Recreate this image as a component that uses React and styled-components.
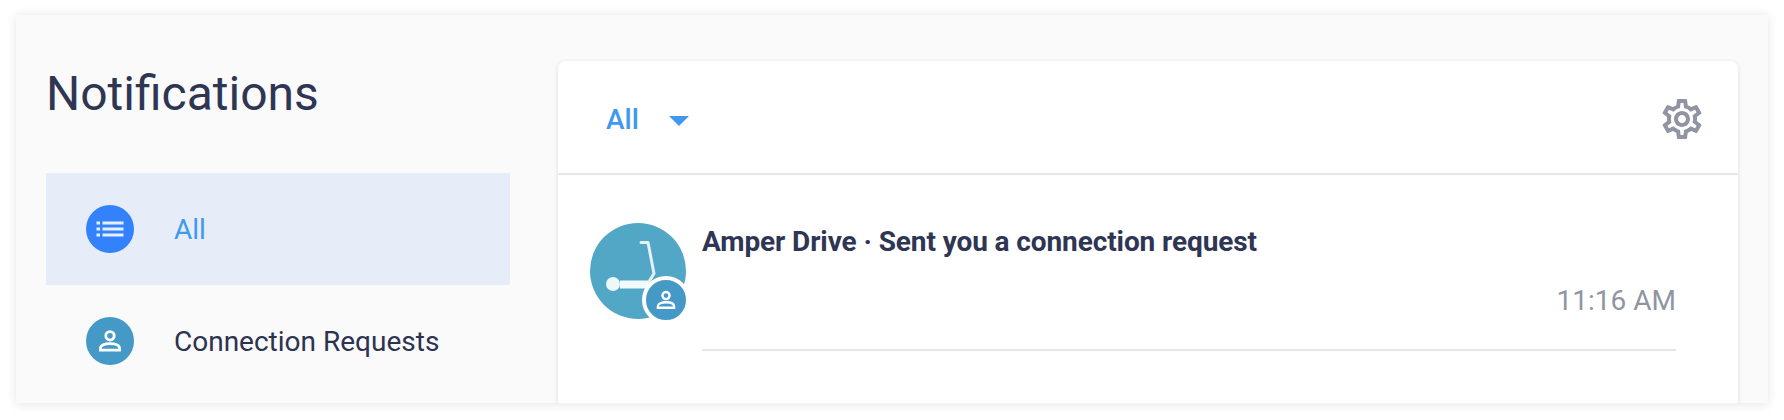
import React from "react";
import styled, { createGlobalStyle } from "styled-components";
import { MdOutlineSettings } from "react-icons/md";

const Global = createGlobalStyle`
  html, body { margin: 0; padding: 0; background: #fff; }
  body { font-family: Roboto, "Liberation Sans", sans-serif; }
  #root { width: 1784px; height: 420px; overflow: hidden; }
`;
const Page = styled.div`
  padding: 15px 16px 17px 16px;
  height: 420px;
  box-sizing: border-box;
`;
const Panel = styled.div`
  height: 388px;
  background: #fafafa;
  box-shadow: 0 1px 10px rgba(30, 40, 70, 0.12);
  display: flex;
  overflow: hidden;
  padding: 46px 30px 0 30px;
  box-sizing: border-box;
`;
const Sidebar = styled.aside`
  width: 464px;
  margin-right: 48px;
  flex: none;
`;
const Title = styled.h1`
  margin: 6px 0 52px;
  font-size: 48px;
  line-height: 54px;
  font-weight: 400;
  color: #2e3654;
`;
const NavItem = styled.div`
  height: 112px;
  display: flex;
  align-items: center;
  padding-left: 40px;
  gap: 40px;
  font-size: 28px;
  color: ${(p) => (p.$active ? "#4098f0" : "#2b3350")};
  background: ${(p) => (p.$active ? "#e6edf8" : "transparent")};
`;
const Circle = styled.span`
  width: ${(p) => p.$size}px;
  height: ${(p) => p.$size}px;
  border-radius: 50%;
  background: ${(p) => p.$color};
  display: flex;
  align-items: center;
  justify-content: center;
  flex: none;
`;
const Card = styled.main`
  flex: 1;
  height: 400px;
  background: #fff;
  border-radius: 8px 8px 0 0;
  box-shadow: 0 1px 4px rgba(30, 40, 70, 0.14);
`;
const CardHead = styled.header`
  height: 114px;
  box-sizing: border-box;
  display: flex;
  align-items: center;
  justify-content: space-between;
  padding: 4px 32px 0 48px;
  border-bottom: 2px solid #e4e6ec;
`;
const Filter = styled.div`
  display: flex;
  align-items: center;
  gap: 30px;
  font-size: 28px;
  font-weight: 500;
  color: #4098f0;
`;
const Caret = styled.span`
  width: 0;
  height: 0;
  border-left: 10px solid transparent;
  border-right: 10px solid transparent;
  border-top: 10px solid #4098f0;
  margin-top: 4px;
`;
const Gear = styled(MdOutlineSettings)`
  font-size: 48px;
  color: #9195a3;
`;
const Row = styled.div`
  display: flex;
  padding: 48px 62px 0 32px;
  gap: 16px;
`;
const AvatarWrap = styled.div`
  position: relative;
  width: 96px;
  height: 96px;
  flex: none;
`;
const Badge = styled.span`
  position: absolute;
  right: -4px;
  bottom: -5px;
  width: 48px;
  height: 48px;
  box-sizing: border-box;
  border: 4px solid #fff;
  border-radius: 50%;
  background: #4599c6;
  display: flex;
  align-items: center;
  justify-content: center;
`;
const Body = styled.div`
  flex: 1;
  min-width: 0;
`;
const Message = styled.div`
  margin-top: 1px;
  font-size: 28px;
  letter-spacing: -0.1px;
  font-weight: 700;
  line-height: 36px;
  color: #2e3654;
`;
const Time = styled.div`
  margin-top: 23px;
  text-align: right;
  font-size: 28px;
  line-height: 36px;
  color: #9195a3;
`;
const Rule = styled.div`
  margin-top: 30px;
  height: 2px;
  background: #e4e6ec;
`;

const ListIcon = () => (
  <svg width="28" height="28" viewBox="0 0 28 28" fill="#fff" opacity="0.88">
    <rect x="0.5" y="6.5" width="3.5" height="3" />
    <rect x="0.5" y="12.5" width="3.5" height="3" />
    <rect x="0.5" y="18.5" width="3.5" height="3" />
    <rect x="6.5" y="6.5" width="21" height="3" />
    <rect x="6.5" y="12.5" width="21" height="3" />
    <rect x="6.5" y="18.5" width="21" height="3" />
  </svg>
);
const PersonIcon = ({ size }) => (
  <svg width={size} height={size} viewBox="0 0 24 24" fill="none" stroke="#fff" strokeWidth="2.6">
    <circle cx="12" cy="7.2" r="3.9" />
    <path d="M3.2 20.4h17.6v-1.6c0-2.8-4-4.4-8.8-4.4s-8.8 1.6-8.8 4.4z" />
  </svg>
);
const Scooter = () => (
  <svg width="96" height="96" viewBox="0 0 96 96">
    <circle cx="48" cy="48" r="48" fill="#52a7c6" />
    <path d="M51 19.5h7l6 31-8 13" fill="none" stroke="#e4f1f6" strokeWidth="3" strokeLinecap="round" strokeLinejoin="round" />
    <rect x="30" y="57.5" width="28" height="8" fill="#f2f9fb" />
    <circle cx="23" cy="61" r="7" fill="#eef7fa" />
  </svg>
);

export default function App() {
  return (
    <Page>
      <Global />
      <Panel>
        <Sidebar>
          <Title>Notifications</Title>
          <NavItem $active>
            <Circle $size={48} $color="#3382fb"><ListIcon /></Circle>
            All
          </NavItem>
          <NavItem>
            <Circle $size={48} $color="#4599c6"><PersonIcon size={26} /></Circle>
            Connection Requests
          </NavItem>
        </Sidebar>
        <Card>
          <CardHead>
            <Filter>All<Caret /></Filter>
            <Gear />
          </CardHead>
          <Row>
            <AvatarWrap>
              <Scooter />
              <Badge><PersonIcon size={22} /></Badge>
            </AvatarWrap>
            <Body>
              <Message>Amper Drive · Sent you a connection request</Message>
              <Time>11:16 AM</Time>
              <Rule />
            </Body>
          </Row>
        </Card>
      </Panel>
    </Page>
  );
}
